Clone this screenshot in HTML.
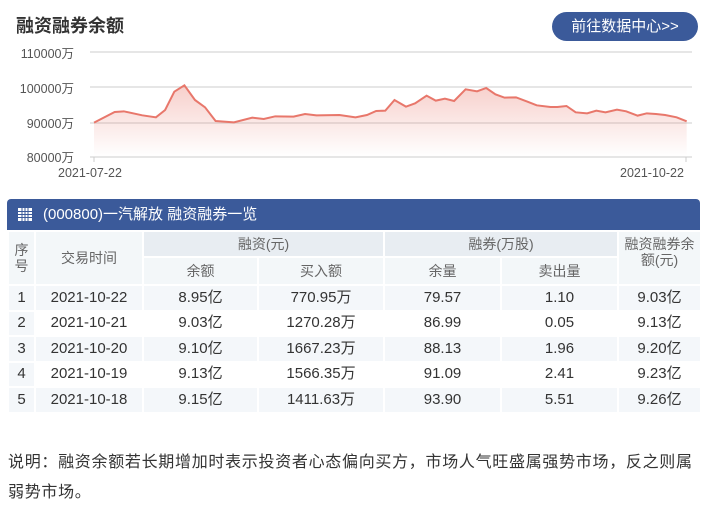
<!DOCTYPE html>
<html><head><meta charset="utf-8"><style>
body{margin:0;width:717px;height:508px;background:#fff;font-family:"Liberation Sans","Noto Sans CJK SC",sans-serif;position:relative;overflow:hidden;color:#333}
.t{position:absolute;left:16px;top:12px;font-size:18px;font-weight:bold;color:#333}
.btn{position:absolute;left:552px;top:12px;width:146px;height:29px;border-radius:15px;background:#3b5a9a;color:#fff;font-size:15px;line-height:29px;text-align:center}
.yl{position:absolute;font-size:12.5px;color:#555;text-align:right;width:74px;left:0}
.bar{position:absolute;left:7px;top:199px;width:693px;height:32px;background:#3b5a9a;border-radius:4px 4px 0 0;color:#fff;font-size:15px;line-height:32px}
table{position:absolute;left:7px;top:230px;width:693px;border-collapse:collapse;table-layout:fixed;font-size:15px;color:#333}
td{border:2px solid #fff;text-align:center;padding:0;height:22px;background:#f4f7fa;line-height:20px;vertical-align:middle;overflow:hidden}
tr.d td{height:23.5px}
tr.h td{color:#666;font-size:14px;background:#f3f7f9}
td.g{background:#e8edf2!important}
tr.w td{background:#fff}
tr.w td.n{background:#f4f7fa}
.foot{position:absolute;left:8px;top:448px;width:698px;font-size:16px;letter-spacing:0.7px;line-height:30px;color:#333}
</style></head><body>
<div class="t">融资融券余额</div>
<div class="btn">前往数据中心&gt;&gt;</div>
<div class="yl" style="top:43px">110000万</div>
<div class="yl" style="top:78px">100000万</div>
<div class="yl" style="top:113px">90000万</div>
<div class="yl" style="top:147px">80000万</div>
<div class="yl" style="top:166px;left:58px;width:auto;text-align:left">2021-07-22</div>
<div class="yl" style="top:166px;left:620px;width:auto;text-align:left">2021-10-22</div>
<svg style="position:absolute;left:0;top:0" width="717" height="195">
<defs><linearGradient id="gr" x1="0" y1="0" x2="0" y2="1"><stop offset="0" stop-color="#e8776b" stop-opacity=".35"/><stop offset="1" stop-color="#e8776b" stop-opacity="0"/></linearGradient></defs>
<g stroke="#ddd" stroke-width="1.5"><line x1="90" y1="52" x2="692" y2="52"/><line x1="90" y1="87" x2="692" y2="87"/><line x1="90" y1="123" x2="692" y2="123"/><line x1="90" y1="157" x2="692" y2="157"/></g>
<g stroke="#ccc"><line x1="94" y1="157" x2="94" y2="162"/><line x1="686" y1="157" x2="686" y2="162"/></g>
<g transform="scale(0.4587,0.3333)">
<path fill="url(#gr)" d="M205,368 L250,336 270,334 310,346 340,352 360,330 380,275 402,256 425,300 447,322 470,363 510,367 550,353 575,357 600,349 640,350 665,342 690,346 740,345 775,352 800,345 820,333 840,332 860,300 885,320 905,310 930,287 950,302 970,296 990,303 1015,268 1040,274 1060,264 1080,283 1100,293 1125,292 1150,305 1170,316 1200,321 1215,321 1235,318 1255,337 1280,340 1300,332 1320,337 1345,329 1365,334 1390,347 1410,340 1430,342 1450,345 1475,352 1497,364 L1497,470 205,470Z"/>
<path fill="none" stroke="#e8776b" stroke-width="2" vector-effect="non-scaling-stroke" d="M205,368 L250,336 270,334 310,346 340,352 360,330 380,275 402,256 425,300 447,322 470,363 510,367 550,353 575,357 600,349 640,350 665,342 690,346 740,345 775,352 800,345 820,333 840,332 860,300 885,320 905,310 930,287 950,302 970,296 990,303 1015,268 1040,274 1060,264 1080,283 1100,293 1125,292 1150,305 1170,316 1200,321 1215,321 1235,318 1255,337 1280,340 1300,332 1320,337 1345,329 1365,334 1390,347 1410,340 1430,342 1450,345 1475,352 1497,364"/>
</g></svg>
<div class="bar"><svg style="position:absolute;left:11px;top:9px" width="14" height="13"><rect width="14" height="13" fill="#fff"/><g fill="#3b5a9a"><rect x="3.5" y="0" width="1" height="13"/><rect x="6.5" y="0" width="1" height="13"/><rect x="9.5" y="0" width="1" height="13"/><rect x="0" y="3" width="14" height="1"/><rect x="0" y="6" width="14" height="1"/><rect x="0" y="9" width="14" height="1"/></g></svg><span style="position:absolute;left:36px">(000800)一汽解放 融资融券一览</span></div>
<table>
<colgroup><col style="width:27px"><col style="width:108px"><col style="width:115px"><col style="width:126px"><col style="width:117px"><col style="width:117px"><col style="width:83px"></colgroup>
<tr class="h"><td rowspan="2" style="line-height:16px">序<br>号</td><td rowspan="2">交易时间</td><td colspan="2" class="g" style="height:24px">融资(元)</td><td colspan="2" class="g">融券(万股)</td><td rowspan="2" style="line-height:16px;vertical-align:top;padding-top:4px">融资融券余<br>额(元)</td></tr>
<tr class="h"><td style="height:26px">余额</td><td>买入额</td><td>余量</td><td>卖出量</td></tr>
<tr class="d"><td class="n">1</td><td>2021-10-22</td><td>8.95亿</td><td>770.95万</td><td>79.57</td><td>1.10</td><td>9.03亿</td></tr>
<tr class="d w"><td class="n">2</td><td>2021-10-21</td><td>9.03亿</td><td>1270.28万</td><td>86.99</td><td>0.05</td><td>9.13亿</td></tr>
<tr class="d"><td class="n">3</td><td>2021-10-20</td><td>9.10亿</td><td>1667.23万</td><td>88.13</td><td>1.96</td><td>9.20亿</td></tr>
<tr class="d w"><td class="n">4</td><td>2021-10-19</td><td>9.13亿</td><td>1566.35万</td><td>91.09</td><td>2.41</td><td>9.23亿</td></tr>
<tr class="d"><td class="n">5</td><td>2021-10-18</td><td>9.15亿</td><td>1411.63万</td><td>93.90</td><td>5.51</td><td>9.26亿</td></tr>
</table>
<div class="foot">说明：融资余额若长期增加时表示投资者心态偏向买方，市场人气旺盛属强势市场，反之则属弱势市场。</div>
</body></html>
